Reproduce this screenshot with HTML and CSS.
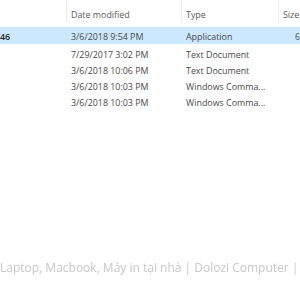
FILE: index.html
```html
<!DOCTYPE html>
<html lang="vi">
<head>
  <meta charset="UTF-8" />
  <meta name="viewport" content="width=device-width, initial-scale=1.0"/>
  <title>File list</title>
  <link rel="stylesheet" href="styles.css">
</head>
<body>
  <div class="files">
    <div class="row header">
      <div class="cell"></div>
      <div class="cell sep">Date modified</div>
      <div class="cell sep">Type</div>
      <div class="cell sep">Size</div>
    </div>
    <div class="row selected">
      <div class="cell name">46</div>
      <div class="cell">3/6/2018 9:54 PM</div>
      <div class="cell">Application</div>
      <div class="cell size">6</div>
    </div>
    <div class="row">
      <div class="cell"></div>
      <div class="cell">7/29/2017 3:02 PM</div>
      <div class="cell">Text Document</div>
      <div class="cell"></div>
    </div>
    <div class="row">
      <div class="cell"></div>
      <div class="cell">3/6/2018 10:06 PM</div>
      <div class="cell">Text Document</div>
      <div class="cell"></div>
    </div>
    <div class="row">
      <div class="cell"></div>
      <div class="cell">3/6/2018 10:03 PM</div>
      <div class="cell">Windows Comma...</div>
      <div class="cell"></div>
    </div>
    <div class="row">
      <div class="cell"></div>
      <div class="cell">3/6/2018 10:03 PM</div>
      <div class="cell">Windows Comma...</div>
      <div class="cell"></div>
    </div>
  </div>
  <div class="watermark">Laptop, Macbook, Máy in tại nhà | Dolozi Computer |</div>
</body>
</html>
```

FILE: styles.css
```css
body {
  margin: 0;
  width: 300px;
  height: 300px;
  overflow: hidden;
  background: #fff;
  font-family: "Open Sans", "Noto Sans", sans-serif;
  display: flex;
  flex-direction: column;
}
.files {
  width: 300px;
  overflow: hidden;
  font-size: 8.9px;
  color: #4a4a4a;
}
.row {
  display: grid;
  grid-template-columns: 66px 115px 97px 22px;
  height: 16px;
  align-items: center;
}
.header {
  height: 22px;
  align-items: stretch;
  margin-bottom: 5px;
  color: #5a5a5a;
}
.header .cell {
  display: flex;
  align-items: center;
  padding-top: 6px;
}
.cell {
  padding-left: 5px;
  white-space: nowrap;
  overflow: hidden;
}
.sep {
  border-left: 1px solid #ebebeb;
  padding-left: 4px;
}
.selected {
  box-sizing: border-box;
  height: 17px;
  padding-top: 2px;
  margin-bottom: 2px;
  background: #cce8ff;
}
.name {
  padding-left: 0;
  font-weight: 600;
  color: #222;
}
.size {
  padding-left: 17px;
}
.watermark {
  margin-top: auto;
  margin-bottom: 24px;
  font-size: 12px;
  color: #c8c8c8;
  white-space: nowrap;
  overflow: hidden;
  filter: blur(0.3px);
}
```
